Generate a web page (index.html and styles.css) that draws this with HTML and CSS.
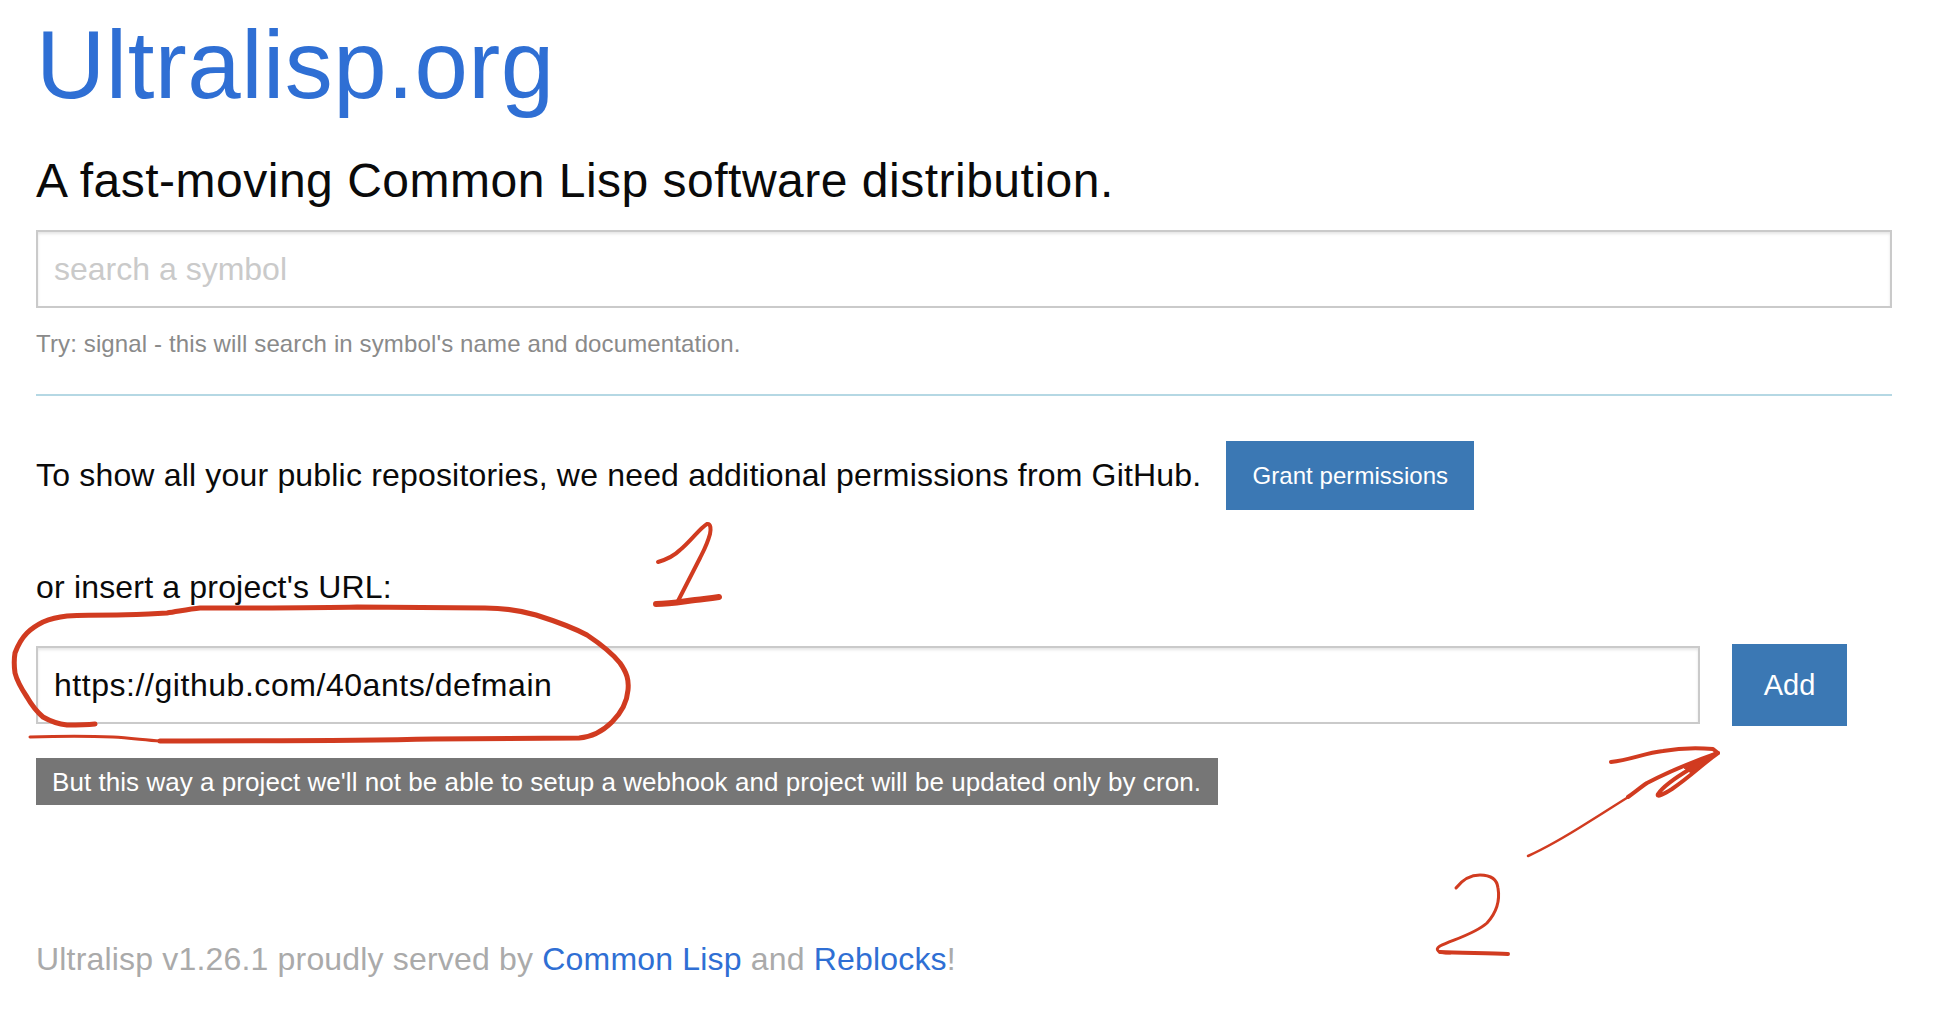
FILE: index.html
```html
<!DOCTYPE html>
<html lang="en">
<head>
<meta charset="utf-8">
<title>Ultralisp.org</title>
<link rel="stylesheet" href="styles.css">
</head>
<body>
<main class="page">
  <h1 class="title"><a href="#">Ultralisp.org</a></h1>
  <h2 class="subtitle">A fast-moving Common Lisp software distribution.</h2>
  <input class="field search" type="text" placeholder="search a symbol">
  <p class="hint">Try: signal - this will search in symbol's name and documentation.</p>
  <hr class="rule">
  <div class="perm">
    <span>To show all your public repositories, we need additional permissions from GitHub.</span>
    <a class="btn grant" href="#">Grant permissions</a>
  </div>
  <p class="insert">or insert a project's URL:</p>
  <div class="url-row">
    <input class="field url" type="text" value="https://github.com/40ants/defmain">
    <button class="btn add" type="button">Add</button>
  </div>
  <div class="note">But this way a project we'll not be able to setup a webhook and project will be updated only by cron.</div>
  <footer class="foot">Ultralisp v1.26.1 proudly served by <a href="#">Common Lisp</a> and <a href="#">Reblocks</a>!</footer>
</main>
<svg class="ink" width="1936" height="1016" viewBox="0 0 1936 1016" fill="none" aria-hidden="true">
  <path class="s5" d="M95 724 C85 725 76 725 67 725 C58 724 50 721 43 717 C36 711 31 704 27 697 C21 688 17 681 15 673 C14 666 14 659 15 653 C18 645 22 638 27 633 C32 628 37 625 43 622 C50 619 58 617 67 616 C85 615 100 615 117 615 C135 615 150 614 167 613 C180 611 190 609 200 608 C260 608 320 608 357 607 L485 608 C505 608 522 611 536 615 C555 621 572 627 587 635 C602 645 612 653 620 663 C627 673 629 680 628 690 C627 703 620 714 612 722 C603 731 592 737 579 738 L434 739 C340 741 240 741 160 741"/>
  <path class="s3" d="M30 737 C60 736 90 736 113 737 C130 738 145 740 160 741"/>
  <path class="s4" d="M658 562 C668 559 675 555 680 550 C690 542 700 528 707 524 C711 523 711 530 710 534 C707 545 703 552 700 558 L678 601"/>
  <path class="s6" d="M656 604 C670 604 680 602 695 600 C705 599 712 598 719 597"/>
  <path class="s2" d="M1528 856 C1550 846 1568 835 1587 823 C1605 812 1620 802 1630 796"/>
  <path class="s4" d="M1628 797 C1635 792 1641 787 1647 783 C1670 771 1695 761 1718 753 C1705 762 1690 777 1672 789 C1664 794 1656 798 1658 794 C1662 788 1675 778 1690 769"/>
  <path class="wedge" d="M1716 752 L1684 768 L1691 773 Z"/>
  <path class="s4" d="M1611 762 C1630 760 1645 753 1663 751 C1680 748 1700 748 1713 749 L1718 753"/>
  <path class="s3" d="M1456 888 C1463 879 1472 875 1480 875 C1490 875 1497 879 1498 888 C1500 900 1497 912 1487 923 C1475 934 1452 940 1440 946 C1434 950 1438 953 1450 953"/>
  <path class="s4" d="M1440 952 C1460 953 1490 953 1508 954"/>
</svg>
</body>
</html>
```
FILE: styles.css
```css
* { box-sizing: border-box; }
html, body { margin: 0; padding: 0; background: #fff; }
body {
  font-family: "Liberation Sans", Arial, sans-serif;
  color: #0a0a0a;
  height: 1016px;
  overflow: hidden;
  position: relative;
}
.page { padding: 0 44px 0 36px; }
a { color: #2f6fd4; text-decoration: none; }
.title {
  margin: 0;
  padding-top: 10px;
  font-size: 96px;
  line-height: 110px;
  font-weight: 400;
  letter-spacing: 0.5px;
}
.subtitle {
  margin: 34px 0 0;
  font-size: 48px;
  line-height: 54px;
  font-weight: 400;
  letter-spacing: 0.5px;
}
.field {
  display: block;
  border: 2px solid #cacaca;
  box-shadow: inset 0 2px 3px rgba(10, 10, 10, 0.1);
  border-radius: 0;
  padding: 0 16px;
  font-family: inherit;
  font-size: 32px;
  color: #0a0a0a;
  background: #fff;
  outline: none;
}
.field::placeholder { color: #cacaca; opacity: 1; }
.search { width: 100%; height: 78px; margin-top: 22px; }
.url { letter-spacing: 0.55px; }
.hint {
  margin: 21px 0 0;
  font-size: 24px;
  line-height: 30px;
  letter-spacing: 0.13px;
  color: #8a8a8a;
}
.rule {
  margin: 35px 0 0;
  border: 0;
  height: 2px;
  background: #b5d8e4;
}
.perm {
  display: flex;
  align-items: center;
  gap: 25px;
  margin-top: 45px;
  font-size: 32px;
  letter-spacing: 0.18px;
}
.btn {
  display: flex;
  align-items: center;
  justify-content: center;
  background: #3b78b4;
  color: #fff;
  border: 0;
  border-radius: 0;
  font-family: inherit;
}
.grant { width: 248px; height: 69px; font-size: 24px; letter-spacing: 0.05px; }
.insert { margin: 59px 0 0; font-size: 32px; line-height: 36px; letter-spacing: 0.18px; }
.url-row {
  display: flex;
  align-items: center;
  gap: 32px;
  margin-top: 39px;
}
.url { width: 1664px; height: 78px; }
.add { width: 115px; height: 82px; font-size: 29px; }
.note {
  width: 1182px;
  height: 47px;
  margin-top: 32px;
  padding-left: 16px;
  background: #767676;
  color: #fff;
  font-size: 26px;
  line-height: 48px;
  letter-spacing: 0.05px;
  white-space: nowrap;
}
.foot {
  margin-top: 136px;
  font-size: 32px;
  line-height: 36px;
  letter-spacing: 0.18px;
  color: #aaa;
}
.ink { position: absolute; left: 0; top: 0; pointer-events: none; }
.ink path { stroke: #d13b20; stroke-linecap: round; stroke-linejoin: round; }
.ink .wedge { fill: #d13b20; stroke-width: 1; }
.s2 { stroke-width: 2.5; }
.s3 { stroke-width: 3; }
.s4 { stroke-width: 4; }
.s5 { stroke-width: 5; }
.s6 { stroke-width: 6; }
```
